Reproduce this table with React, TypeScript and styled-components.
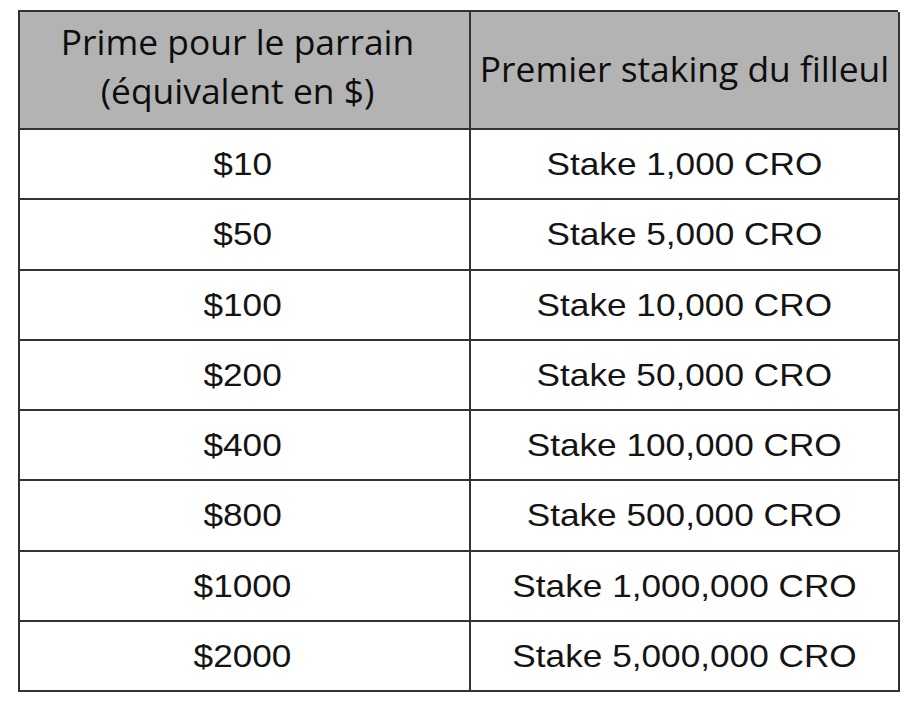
import React from "react";
import styled, { createGlobalStyle } from "styled-components";

const Global = createGlobalStyle`
  html, body { margin: 0; padding: 0; background: #ffffff; }
  body { width: 922px; height: 701px; overflow: hidden; }
`;

const Page = styled.div`
  padding: 10px 0 0 18px;
`;

const Grid = styled.div`
  display: grid;
  grid-template-columns: 451px 429px;
  grid-template-rows: 118px repeat(8, 70.25px);
  width: 880px;
  box-sizing: border-box;
  border-top: 2px solid #333333;
  border-left: 2px solid #333333;
`;

const Cell = styled.div<{ $head?: boolean; $shift?: number; $lift?: number }>`
  display: flex;
  align-items: center;
  justify-content: center;
  box-sizing: border-box;
  border-right: 2px solid #333333;
  border-bottom: 2px solid #333333;
  background: ${(p) => (p.$head ? "#b3b3b3" : "#ffffff")};
  padding-right: ${(p) => p.$shift ?? 0}px;
  padding-bottom: ${(p) => p.$lift ?? 0}px;
  color: #111111;
  text-align: center;
`;

const HeadText = styled.span`
  display: inline-block;
  font-family: "Open Sans", "Noto Sans", sans-serif;
  font-size: 35.4px;
  line-height: 49px;
  color: #0d0d0d;
  white-space: nowrap;
`;

const BodyText = styled.span`
  display: inline-block;
  font-family: "Liberation Sans", Arial, sans-serif;
  font-size: 32px;
  line-height: 36px;
  color: #141414;
  transform: scaleX(1.1);
  white-space: nowrap;
`;

const rows: [string, string][] = [
  ["$10", "Stake 1,000 CRO"],
  ["$50", "Stake 5,000 CRO"],
  ["$100", "Stake 10,000 CRO"],
  ["$200", "Stake 50,000 CRO"],
  ["$400", "Stake 100,000 CRO"],
  ["$800", "Stake 500,000 CRO"],
  ["$1000", "Stake 1,000,000 CRO"],
  ["$2000", "Stake 5,000,000 CRO"],
];

export default function App() {
  return (
    <>
      <Global />
      <Page>
        <Grid>
          <Cell $head $shift={14} $lift={9}>
            <HeadText>
              Prime pour le parrain
              <br />
              (équivalent en $)
            </HeadText>
          </Cell>
          <Cell $head $lift={4}>
            <HeadText>Premier staking du filleul</HeadText>
          </Cell>
          {rows.map(([a, b]) => (
            <React.Fragment key={a}>
              <Cell $shift={4}>
                <BodyText>{a}</BodyText>
              </Cell>
              <Cell>
                <BodyText>{b}</BodyText>
              </Cell>
            </React.Fragment>
          ))}
        </Grid>
      </Page>
    </>
  );
}
